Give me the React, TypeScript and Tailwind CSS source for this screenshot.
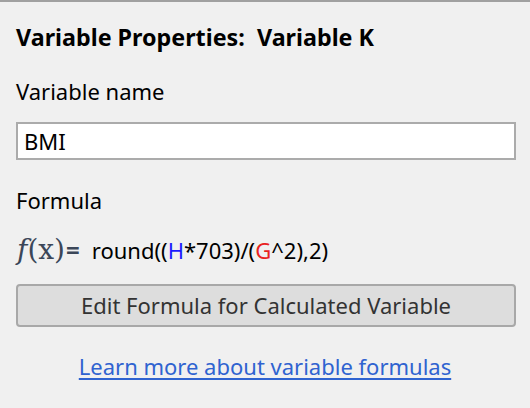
import React from "react";

const App = () => {
  return (
    <div
      className="w-[530px] h-[408px] bg-[#f0f0f0] border-t-2 border-[#a0a0a0] text-black overflow-hidden"
      style={{ fontFamily: '"Noto Sans", "Open Sans", sans-serif' }}
    >
      <div className="px-4">
        {/* Title */}
        <h1 className="mt-[19px] h-[34px] flex items-center text-[23.3px] font-bold leading-none">
          Variable Properties:&nbsp;&nbsp;Variable K
        </h1>

        {/* Variable name */}
        <div className="mt-[22px] h-[28px] flex items-center text-[22px]">Variable name</div>
        <input
          readOnly
          value="BMI"
          className="mt-[17px] w-[500px] h-[38px] bg-white border-2 border-[#ababab] px-[6px] text-[22px] outline-none"
          style={{ fontFamily: '"Noto Sans", "Open Sans", sans-serif' }}
        />

        {/* Formula */}
        <div className="mt-[26px] h-[28px] flex items-center text-[22px]">Formula</div>
        <div className="mt-[20px] h-[32px] flex items-center text-[22px]">
          <span
            className="text-[#3b4658] text-[28px] flex items-center mr-[12px] ml-[1px]"
            style={{ fontFamily: '"DejaVu Serif", "Liberation Serif", serif' }}
          >
            <span className="italic">f</span>
            <span>(x)</span>
            <span className="text-[24px] font-bold ml-[1px]" style={{ fontFamily: '"Noto Sans", sans-serif' }}>=</span>
          </span>
          <span>
            round((<span className="text-[#1a1aff]">H</span>*703)/(<span className="text-[#e8231f]">G</span>^2),2)
          </span>
        </div>

        {/* Button */}
        <button className="mt-[18px] w-[500px] h-[43px] rounded-[4px] bg-[#dddddd] border-2 border-[#a8a8a8] text-[22px] text-[#333333]">
          Edit Formula for Calculated Variable
        </button>

        {/* Link */}
        <div className="mt-[23px] flex justify-center">
          <a href="#" className="text-[22px] text-[#2f63d0] underline underline-offset-[3px]">
            Learn more about variable formulas
          </a>
        </div>
      </div>
    </div>
  );
};

export default App;
